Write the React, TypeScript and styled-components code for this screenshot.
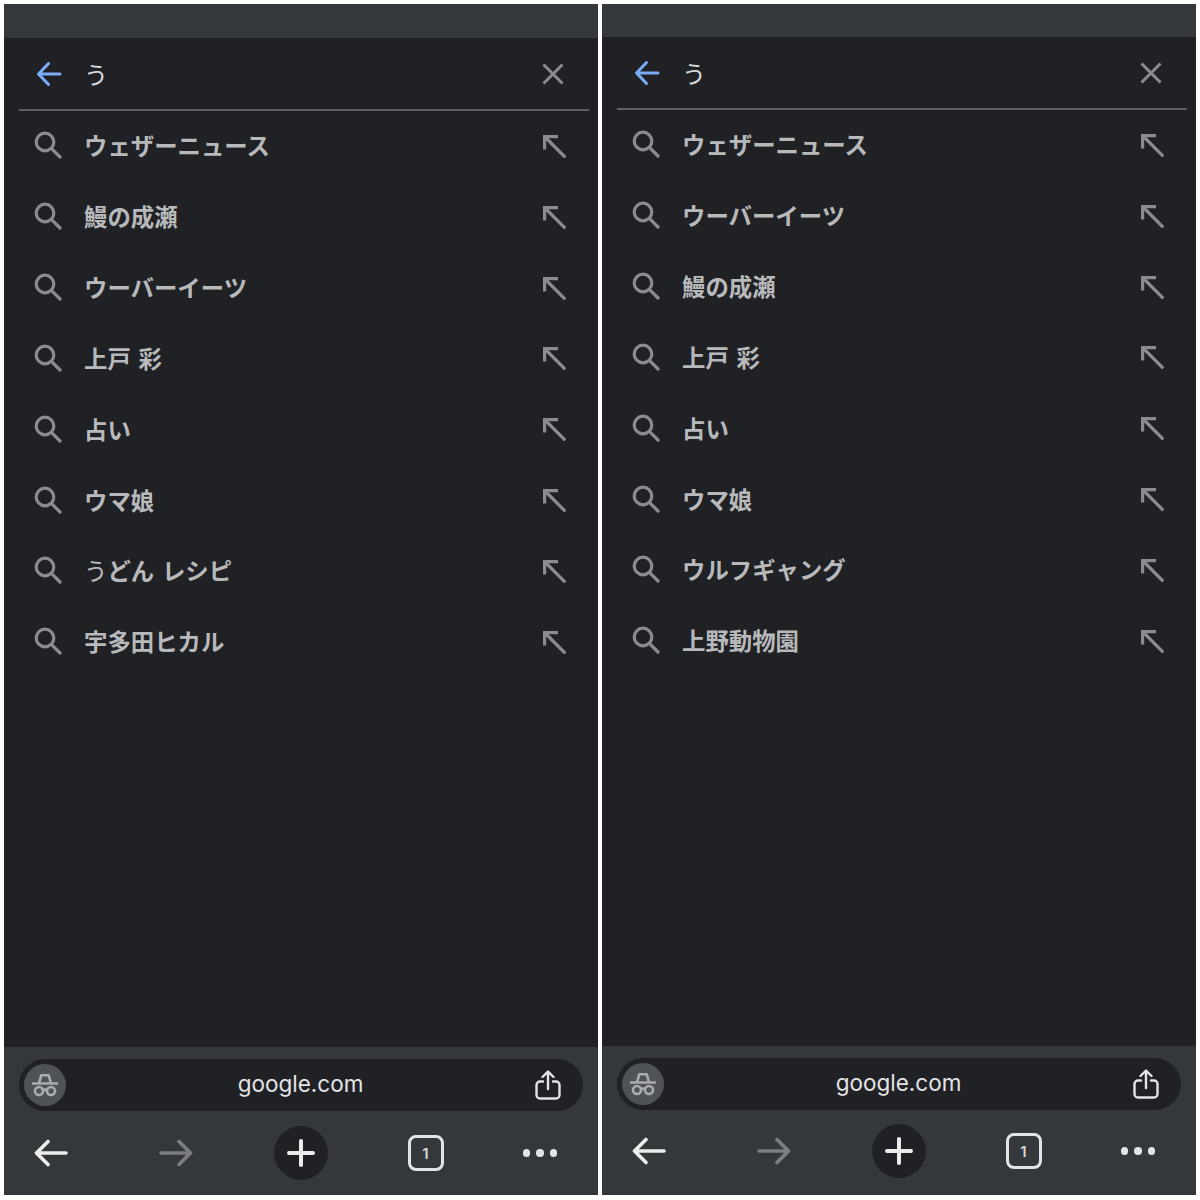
import React from 'react';
import styled, { createGlobalStyle } from 'styled-components';

const GlobalStyle = createGlobalStyle`
  html, body {
    margin: 0;
    padding: 0;
    background: #ffffff;
  }
`;

const Page = styled.div`
  width: 1200px;
  height: 1200px;
  box-sizing: border-box;
  padding: 4px;
  display: grid;
  grid-template-columns: 594px 594px;
  column-gap: 4px;
  background: #ffffff;
`;

const Phone = styled.div`
  height: 1191px;
  display: flex;
  flex-direction: column;
  background: #202125;
  font-family: 'Noto Sans CJK JP', 'Noto Sans', sans-serif;
`;

const StatusStrip = styled.div<{ $height: number }>`
  height: ${({ $height }) => $height}px;
  flex: none;
  background: #35383b;
`;

const SearchRow = styled.div`
  height: 73px;
  flex: none;
  box-sizing: border-box;
  margin: 0 9px 0 15px;
  padding: 0 25px 0 17px;
  display: flex;
  align-items: center;
  border-bottom: 2px solid #5d5f62;
`;

const QueryText = styled.span`
  flex: 1;
  margin-left: 22px;
  color: #d7d8da;
  font-size: 24px;
  line-height: 30px;
`;

const Suggestions = styled.ul`
  flex: 1;
  margin: -1px 0 0;
  padding: 0;
  list-style: none;
`;

const Suggestion = styled.li`
  height: 70.85px;
  box-sizing: border-box;
  padding: 0 32px 0 30px;
  display: flex;
  align-items: center;
`;

const SuggestionText = styled.span`
  flex: 1;
  margin-left: 22px;
  color: #b8b9bb;
  font-size: 23.4px;
  font-weight: 700;
  line-height: 30px;
  word-spacing: 2.5px;
  white-space: pre;
`;

const QueryMatch = styled.span`
  font-weight: 400;
`;

const FillSlot = styled.span`
  display: flex;
  flex: none;
  margin-top: 2px;
`;

const BottomBar = styled.div<{ $raised: boolean }>`
  height: ${({ $raised }) => ($raised ? 149 : 148)}px;
  flex: none;
  box-sizing: border-box;
  padding-top: 12px;
  background: #35383b;
`;

const UrlPill = styled.div`
  height: 52px;
  margin: 0 15px;
  box-sizing: border-box;
  padding: 0 22px 0 5px;
  display: flex;
  align-items: center;
  border-radius: 26px;
  background: #202125;
`;

const IncognitoBadge = styled.div`
  width: 42px;
  height: 42px;
  flex: none;
  display: flex;
  align-items: center;
  justify-content: center;
  border-radius: 50%;
  background: #505356;
`;

const UrlText = styled.span`
  flex: 1;
  padding-bottom: 2px;
  text-align: center;
  color: #e3e4e5;
  font-family: Inter, 'Liberation Sans', sans-serif;
  font-size: 22.5px;
  line-height: 30px;
`;

const NavRow = styled.div<{ $raised: boolean }>`
  margin-top: ${({ $raised }) => ($raised ? 14 : 15)}px;
  padding-left: 14px;
  display: grid;
  grid-template-columns: repeat(4, 66px) 44px;
  column-gap: 59px;
  align-items: center;
  justify-items: center;
  height: 54px;
`;

const NewTabButton = styled.div`
  width: 54px;
  height: 54px;
  display: flex;
  align-items: center;
  justify-content: center;
  border-radius: 50%;
  background: #202125;
`;

const TabCount = styled.div`
  width: 36px;
  height: 36px;
  margin-right: 1px;
  box-sizing: border-box;
  display: flex;
  align-items: center;
  justify-content: center;
  border: 3px solid #e3e4e5;
  border-radius: 8px;
  color: #d5d6d8;
  font-family: Inter, 'Liberation Sans', sans-serif;
  font-size: 15px;
  font-weight: 600;
`;

const Dots = styled.div`
  display: flex;
  gap: 6px;
`;

const Dot = styled.span`
  width: 7.5px;
  height: 7.5px;
  border-radius: 50%;
  background: #e3e4e5;
`;

const BackIcon = () => (
  <svg width="26" height="26" viewBox="0 0 26 26" fill="none" stroke="#7cabf8" strokeWidth="3" strokeLinecap="round" strokeLinejoin="round">
    <path d="M24 13H3M12.500 2.500 2.500 13l10 10.500" />
  </svg>
);

const ForwardIcon = () => (
  <svg width="34" height="28" viewBox="0 0 34 28" fill="none" stroke="#7b7d80" strokeWidth="3.6" strokeLinecap="round" strokeLinejoin="round">
    <path d="M2 14H31.500M20 2.500 31.500 14 20 25.500" />
  </svg>
);

const ToolbarBackIcon = () => (
  <svg width="34" height="28" viewBox="0 0 34 28" fill="none" stroke="#eceded" strokeWidth="3.6" strokeLinecap="round" strokeLinejoin="round">
    <path d="M32 14H2.500M14 2.500 2.500 14 14 25.500" />
  </svg>
);

const CloseIcon = () => (
  <svg width="22" height="22" viewBox="0 0 22 22" fill="none" stroke="#8a8c8f" strokeWidth="3">
    <path d="M1.500 1.500l19 19M20.500 1.500l-19 19" />
  </svg>
);

const SearchIcon = () => (
  <svg width="28" height="28" viewBox="0 0 28 28" fill="none" stroke="#8a8c8f" strokeWidth="3.2" strokeLinecap="round">
    <circle cx="11" cy="11" r="8.800" />
    <path d="M17.600 17.600 26 26" />
  </svg>
);

const FillIcon = () => (
  <svg width="23" height="23" viewBox="0 0 23 23" fill="none" stroke="#8a8c8f" strokeWidth="3.2">
    <path d="M2 2 21.300 21.300" strokeLinecap="round" />
    <path d="M1.600 14.500V1.600H15" />
  </svg>
);

const IncognitoIcon = () => (
  <svg width="26" height="26" viewBox="0 0 26 26" fill="none" stroke="#aaacae" strokeWidth="2.600">
    <path d="M1 11.500h24" strokeLinecap="round" />
    <path d="M7 11.500 9.300 3.200h7.400L19 11.500" strokeLinejoin="round" />
    <circle cx="7" cy="19" r="4" />
    <circle cx="19" cy="19" r="4" />
    <path d="M11 18.500c1.200-1 2.800-1 4 0" />
  </svg>
);

const ShareIcon = () => (
  <svg width="26" height="30" viewBox="0 0 26 30" fill="none" stroke="#e3e4e5" strokeWidth="2.400" strokeLinecap="round" strokeLinejoin="round">
    <path d="M13 19V2M7.500 7 13 1.500 18.500 7" />
    <path d="M8 11.500H5a3.500 3.500 0 0 0-3.500 3.500v10A3.500 3.500 0 0 0 5 28.500h16a3.500 3.500 0 0 0 3.500-3.500V15a3.500 3.500 0 0 0-3.500-3.500h-3" />
  </svg>
);

const PlusIcon = () => (
  <svg width="28" height="28" viewBox="0 0 28 28" fill="none" stroke="#eceded" strokeWidth="4" strokeLinecap="round">
    <path d="M14 2v24M2 14h24" />
  </svg>
);

type Item = { match?: string; rest: string };

const PhoneScreen = ({ stripHeight, raised, items }: { stripHeight: number; raised: boolean; items: Item[] }) => (
  <Phone>
    <StatusStrip $height={stripHeight} />
    <SearchRow>
      <BackIcon />
      <QueryText>う</QueryText>
      <CloseIcon />
    </SearchRow>
    <Suggestions>
      {items.map((item) => (
        <Suggestion key={item.rest}>
          <SearchIcon />
          <SuggestionText>
            {item.match && <QueryMatch>{item.match}</QueryMatch>}
            {item.rest}
          </SuggestionText>
          <FillSlot>
            <FillIcon />
          </FillSlot>
        </Suggestion>
      ))}
    </Suggestions>
    <BottomBar $raised={raised}>
      <UrlPill>
        <IncognitoBadge>
          <IncognitoIcon />
        </IncognitoBadge>
        <UrlText>google.com</UrlText>
        <ShareIcon />
      </UrlPill>
      <NavRow $raised={raised}>
        <ToolbarBackIcon />
        <ForwardIcon />
        <NewTabButton>
          <PlusIcon />
        </NewTabButton>
        <TabCount>1</TabCount>
        <Dots>
          <Dot />
          <Dot />
          <Dot />
        </Dots>
      </NavRow>
    </BottomBar>
  </Phone>
);

const leftItems: Item[] = [
  { rest: 'ウェザーニュース' },
  { rest: '鰻の成瀬' },
  { rest: 'ウーバーイーツ' },
  { rest: '上戸 彩' },
  { rest: '占い' },
  { rest: 'ウマ娘' },
  { match: 'う', rest: 'どん レシピ' },
  { rest: '宇多田ヒカル' },
];

const rightItems: Item[] = [
  { rest: 'ウェザーニュース' },
  { rest: 'ウーバーイーツ' },
  { rest: '鰻の成瀬' },
  { rest: '上戸 彩' },
  { rest: '占い' },
  { rest: 'ウマ娘' },
  { rest: 'ウルフギャング' },
  { rest: '上野動物園' },
];

export default function App() {
  return (
    <>
      <GlobalStyle />
      <Page>
        <PhoneScreen stripHeight={34} raised={false} items={leftItems} />
        <PhoneScreen stripHeight={33} raised items={rightItems} />
      </Page>
    </>
  );
}
